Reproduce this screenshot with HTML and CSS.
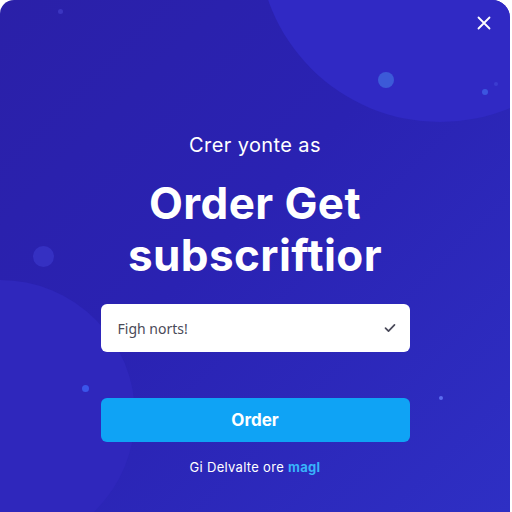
FILE: index.html
```html
<!DOCTYPE html>
<html lang="en">
<head>
<meta charset="utf-8">
<title>Order subscription</title>
<link rel="stylesheet" href="styles.css">
</head>
<body>
<div class="card">
  <span class="orb orb-top"></span>
  <span class="orb orb-bottom"></span>
  <span class="dot d1"></span>
  <span class="dot d2"></span>
  <span class="dot d3"></span>
  <span class="dot d4"></span>
  <span class="dot d5"></span>
  <span class="dot d6"></span>
  <span class="dot d7"></span>
  <button class="close" aria-label="Close">
    <svg width="14" height="14" viewBox="0 0 14 14"><path d="M1.5 1.5l11 11M12.5 1.5l-11 11" stroke="#fff" stroke-width="1.8" stroke-linecap="round" fill="none"/></svg>
  </button>
  <main class="content">
    <p class="eyebrow">Crer yonte as</p>
    <h1 class="title">Order Get<br>subscriftior</h1>
    <label class="field">
      <span class="field-text">Figh norts!</span>
      <svg class="check" width="12" height="10" viewBox="0 0 12 10"><path d="M1.5 5.2l3 3 6-6.4" stroke="#4a4a5a" stroke-width="1.7" fill="none" stroke-linecap="round" stroke-linejoin="round"/></svg>
    </label>
    <button class="order">Order</button>
    <p class="foot">Gi Delvalte ore <span class="link">magl</span></p>
  </main>
</div>
</body>
</html>
```

FILE: styles.css
```css
html, body {
  margin: 0;
  padding: 0;
  background: #ffffff;
}

.card {
  position: relative;
  width: 510px;
  height: 512px;
  overflow: hidden;
  border-radius: 14px 18px 0 0;
  background: linear-gradient(135deg, #2a20a8 0%, #2a22b2 45%, #2e2fc4 100%);
  font-family: "Inter", "Open Sans", sans-serif;
}

.orb {
  position: absolute;
  border-radius: 50%;
}

.orb-top {
  left: 258px;
  top: -242px;
  width: 364px;
  height: 364px;
  background: #3029c4;
}

.orb-bottom {
  left: -135px;
  top: 280px;
  width: 270px;
  height: 270px;
  background: #2f27bc;
}

.dot {
  position: absolute;
  border-radius: 50%;
}

.d1 { left: 378px; top: 72px; width: 16px; height: 16px; background: #3c5ad8; filter: blur(0.6px); }
.d2 { left: 482px; top: 89px; width: 6px; height: 6px; background: #3c55e0; }
.d3 { left: 33px; top: 246px; width: 21px; height: 21px; background: #3530c2; }
.d4 { left: 82px; top: 385px; width: 7px; height: 7px; background: #3a55ea; }
.d5 { left: 439px; top: 396px; width: 4px; height: 4px; background: #5b6cf0; }
.d6 { left: 58px; top: 9px; width: 5px; height: 5px; background: #3b35c0; }
.d7 { left: 494px; top: 82px; width: 4px; height: 4px; background: #3b3cd0; }

.close {
  position: absolute;
  top: 16px;
  right: 19px;
  width: 14px;
  height: 14px;
  padding: 0;
  border: 0;
  background: none;
  display: flex;
}

.content {
  position: relative;
  display: flex;
  flex-direction: column;
  align-items: center;
  padding-top: 133px;
}

.eyebrow {
  margin: 0;
  color: #ffffff;
  font-size: 20px;
  line-height: 24px;
  font-weight: 400;
  letter-spacing: 0.4px;
}

.title {
  margin: 20px 0 0;
  color: #ffffff;
  font-size: 44px;
  line-height: 52px;
  font-weight: 700;
  text-align: center;
  letter-spacing: 0.4px;
}

.field {
  margin-top: 23px;
  box-sizing: border-box;
  width: 309px;
  height: 48px;
  padding: 0 14px 0 17px;
  display: flex;
  align-items: center;
  justify-content: space-between;
  background: #ffffff;
  border-radius: 6px;
}

.field-text {
  color: #4a4a58;
  font-size: 14px;
  font-family: "Noto Sans", sans-serif;
}

.order {
  margin-top: 46px;
  width: 309px;
  height: 44px;
  border: 0;
  border-radius: 6px;
  background: #0fa3f5;
  color: #ffffff;
  font-family: inherit;
  font-size: 17px;
  font-weight: 700;
}

.foot {
  margin: 17px 0 0;
  color: #ffffff;
  font-size: 13px;
  line-height: 16px;
  letter-spacing: 0.3px;
}

.link {
  color: #38b4fb;
  font-weight: 700;
}
```
